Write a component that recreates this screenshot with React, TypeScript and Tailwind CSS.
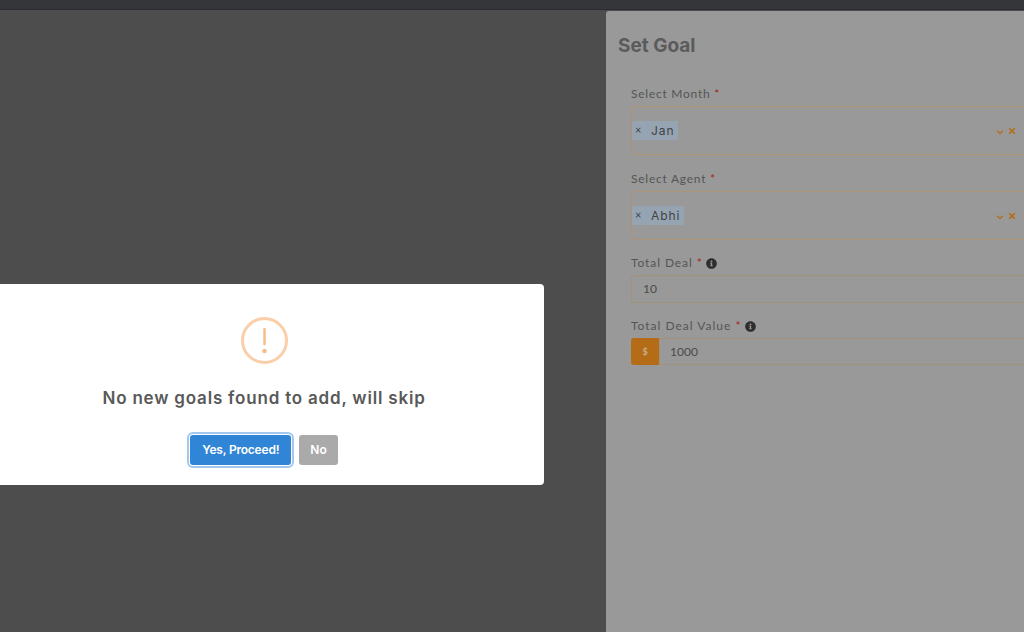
import React from "react";

function Req() {
  return <span className="text-[#a8241c]"> *</span>;
}

function Info() {
  return (
    <svg viewBox="0 0 512 512" className="ml-[3px] h-[11px] w-[11px] shrink-0" fill="#2e2e2e">
      <path d="M256 8C119 8 8 119 8 256s111 248 248 248 248-111 248-248S393 8 256 8zm0 110a42 42 0 1 1 0 84 42 42 0 0 1 0-84zm56 254c0 7-5 12-12 12h-88c-7 0-12-5-12-12v-24c0-7 5-12 12-12h12v-64h-12c-7 0-12-5-12-12v-24c0-7 5-12 12-12h64c7 0 12 5 12 12v100h12c7 0 12 5 12 12v24z" />
    </svg>
  );
}

function SelectField({ label, value }: { label: string; value: string }) {
  return (
    <div className="flex flex-col">
      <div className="h-[20px] text-[12px] leading-[20px] tracking-[0.75px] text-[#555]">
        {label}
        <Req />
      </div>
      <div className="mt-[2px] flex h-[49px] w-[420px] items-center rounded-[3px] border border-[#ad9273]">
        <div className="flex h-[19px] items-center rounded-[1px] bg-[#96a3b0] text-[#3f434a]">
          <span className="flex h-full w-[15px] items-center border-r border-[#8ba5bf] pl-[3px] text-[11px]">×</span>
          <span className="pl-[4px] pr-[4px] font-['Inter',sans-serif] text-[12px] tracking-[0.9px]">{value}</span>
        </div>
        <div className="ml-auto flex items-center gap-[4px] pr-[34px] text-[#b56c16]">
          <svg viewBox="0 0 10 10" className="mt-[2px] h-[8px] w-[8px]" fill="none" stroke="currentColor" strokeWidth="1.6">
            <path d="M1.5 3.5 5 7l3.5-3.5" />
          </svg>
          <svg viewBox="0 0 10 10" className="h-[8px] w-[8px]" fill="none" stroke="currentColor" strokeWidth="2">
            <path d="M1.5 1.5l7 7M8.5 1.5l-7 7" />
          </svg>
        </div>
      </div>
    </div>
  );
}

export default function App() {
  return (
    <div className="relative h-[632px] w-[1024px] overflow-hidden bg-[#4d4d4d] font-['Lato',sans-serif]">
      <div className="h-[10px] border-b border-[#2b2c2f] bg-[#35363a]" />
      <div className="ml-[606px] mt-[1px] h-[621px] w-[440px] rounded-tl-[3px] bg-[#999999] pl-[12px] pt-[24px]">
        <h2 className="font-['Inter',sans-serif] text-[19px] font-bold leading-[22px] text-[#5b5b5b]">Set Goal</h2>
        <div className="ml-[13px] mt-[27px] flex flex-col gap-[14px]">
          <SelectField label="Select Month" value="Jan" />
          <SelectField label="Select Agent" value="Abhi" />
          <div className="-mt-[1px] flex flex-col">
            <div className="flex h-[20px] items-center text-[12px] tracking-[0.9px] text-[#555]">
              <span className="whitespace-pre">Total Deal<Req /></span>
              <Info />
            </div>
            <div className="mt-[2px] flex h-[28px] w-[420px] items-center rounded-[3px] border border-[#a3917a] pl-[11px] text-[12px] text-[#4a4a4a]">
              10
            </div>
          </div>
          <div className="-mt-[1px] flex flex-col">
            <div className="flex h-[20px] items-center text-[12px] tracking-[1px] text-[#555]">
              <span className="whitespace-pre">Total Deal Value<Req /></span>
              <Info />
            </div>
            <div className="mt-[2px] flex h-[27px] w-[420px] items-stretch">
              <div className="flex w-[28px] items-center justify-center rounded-l-[3px] bg-[#b56c16] text-[9px] font-bold text-[#c9b08f]">$</div>
              <div className="flex flex-1 items-center rounded-r-[3px] border border-[#a3917a] pl-[10px] text-[12px] text-[#4a4a4a]">1000</div>
            </div>
          </div>
        </div>
      </div>

      <div className="absolute left-[-16px] top-[284px] flex h-[201px] w-[560px] flex-col items-center rounded-[4px] bg-white pt-[33px]">
        <div className="flex h-[47px] w-[47px] items-center justify-center rounded-full border-[3px] border-[#facea8]">
          <svg viewBox="0 0 10 30" className="h-[26px] w-[9px]" fill="#f8bb86">
            <rect x="3.6" y="0" width="2.8" height="20" rx="1.2" />
            <circle cx="5" cy="26.5" r="2.6" />
          </svg>
        </div>
        <h2 className="mt-[22px] font-['Inter',sans-serif] text-[17px] font-semibold leading-[24px] tracking-[0.8px] text-[#595959]">
          No new goals found to add, will skip
        </h2>
        <div className="mt-[25px] flex items-center gap-[8px]">
          <button className="flex h-[30px] items-center rounded-[3px] bg-[#3085d6] px-[12px] font-['Inter',sans-serif] text-[12px] font-semibold tracking-[-0.2px] text-white shadow-[0_0_0_1px_#fff,0_0_0_3px_rgba(48,133,214,0.45)]">
            Yes, Proceed!
          </button>
          <button className="flex h-[30px] items-center rounded-[3px] bg-[#aaaaaa] px-[11px] font-['Inter',sans-serif] text-[12px] font-semibold text-white">
            No
          </button>
        </div>
      </div>
    </div>
  );
}
